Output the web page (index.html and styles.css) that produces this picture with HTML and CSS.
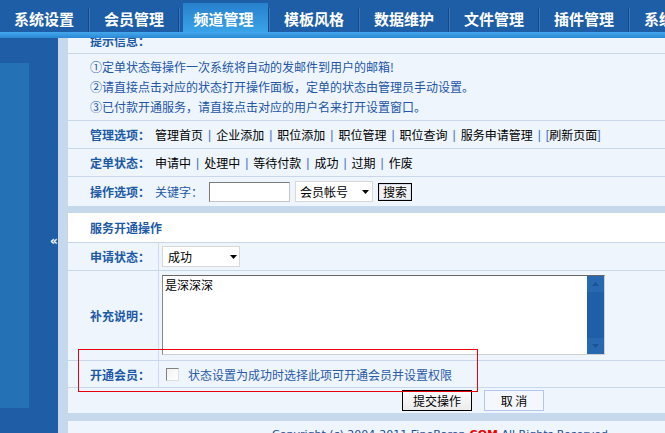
FILE: index.html
```html
<!DOCTYPE html>
<html lang="zh-CN">
<head>
<meta charset="utf-8">
<title>服务开通操作</title>
<link rel="stylesheet" href="styles.css">
</head>
<body>
<header class="topnav">
  <nav class="tabs">
    <a class="tab">系统设置</a><span class="tab-sep"></span>
    <a class="tab">会员管理</a><span class="tab-sep"></span>
    <a class="tab active">频道管理</a><span class="tab-sep"></span>
    <a class="tab">模板风格</a><span class="tab-sep"></span>
    <a class="tab">数据维护</a><span class="tab-sep"></span>
    <a class="tab">文件管理</a><span class="tab-sep"></span>
    <a class="tab">插件管理</a><span class="tab-sep"></span>
    <a class="tab">系统帮助</a>
  </nav>
  <div class="nav-strip"></div>
</header>
<div class="main">
  <aside class="sidebar">
    <div class="side-menu"></div>
    <span class="side-toggle">«</span>
  </aside>
  <div class="content">
    <section class="panel panel-info">
      <div class="panel-head">提示信息：</div>
      <div class="tips">
        <p>①定单状态每操作一次系统将自动的发邮件到用户的邮箱!</p>
        <p>②请直接点击对应的状态打开操作面板，定单的状态由管理员手动设置。</p>
        <p>③已付款开通服务，请直接点击对应的用户名来打开设置窗口。</p>
      </div>
      <div class="opt-row">
        <span class="opt-label">管理选项：</span><a class="opt-link">管理首页</a><span class="sep">|</span><a class="opt-link">企业添加</a><span class="sep">|</span><a class="opt-link">职位添加</a><span class="sep">|</span><a class="opt-link">职位管理</a><span class="sep">|</span><a class="opt-link">职位查询</a><span class="sep">|</span><a class="opt-link">服务申请管理</a><span class="sep">|</span><span class="bracket">[</span><a class="opt-link">刷新页面</a><span class="bracket">]</span>
      </div>
      <div class="opt-row">
        <span class="opt-label">定单状态：</span><a class="opt-link">申请中</a><span class="sep">|</span><a class="opt-link">处理中</a><span class="sep">|</span><a class="opt-link">等待付款</a><span class="sep">|</span><a class="opt-link">成功</a><span class="sep">|</span><a class="opt-link">过期</a><span class="sep">|</span><a class="opt-link">作废</a>
      </div>
      <div class="opt-row opt-search">
        <span class="opt-label">操作选项：</span><span class="kw-label">关键字：</span>
        <input class="kw-input" type="text">
        <span class="select-wrap sel-field">
          <select class="fake-select"><option>会员帐号</option></select>
          <svg class="sel-arrow" width="7" height="4" viewBox="0 0 7 4"><path d="M0 0H7L3.5 4Z" fill="#000"/></svg>
        </span>
        <button class="btn-search" type="button">搜索</button>
      </div>
    </section>

    <section class="panel panel-form">
      <div class="form-title">服务开通操作</div>
      <div class="form-row row-status">
        <div class="form-label">申请状态：</div>
        <div class="form-field">
          <span class="select-wrap sel-status">
            <select class="fake-select"><option>成功</option></select>
            <svg class="sel-arrow" width="7" height="4" viewBox="0 0 7 4"><path d="M0 0H7L3.5 4Z" fill="#000"/></svg>
          </span>
        </div>
      </div>
      <div class="form-row row-note">
        <div class="form-label">补充说明：</div>
        <div class="form-field field-note">
          <div class="textbox">
            <textarea class="note-area">是深深深</textarea>
            <div class="scrollbar">
              <span class="sb-btn"><svg width="7" height="4" viewBox="0 0 7 4"><path d="M0 4H7L3.5 0Z" fill="#1a5293"/></svg></span>
              <span class="sb-track"></span>
              <span class="sb-btn"><svg width="7" height="4" viewBox="0 0 7 4"><path d="M0 0H7L3.5 4Z" fill="#1a5293"/></svg></span>
            </div>
          </div>
        </div>
      </div>
      <div class="form-row row-member">
        <div class="form-label">开通会员：</div>
        <div class="form-field field-check">
          <input class="check" type="checkbox">
          <span class="check-text">状态设置为成功时选择此项可开通会员并设置权限</span>
        </div>
      </div>
      <div class="form-actions">
        <button class="btn-submit" type="button">提交操作</button>
        <button class="btn-cancel" type="button">取 消</button>
      </div>
      <div class="highlight-box"></div>
    </section>

    <footer class="panel footer">Copyright (c) 2004-2011 FineBaron<b class="brand">.COM</b> All Rights Reserved</footer>
  </div>
</div>
</body>
</html>
```

FILE: styles.css
```css
* { box-sizing: border-box; }
html, body { margin: 0; padding: 0; }
body {
  width: 665px;
  height: 433px;
  overflow: hidden;
  background: #c6d8ec;
  font-family: "Noto Sans CJK SC", "Liberation Sans", sans-serif;
  font-size: 12px;
  color: #000;
}

/* top navigation */
.topnav { height: 38px; background: #1e5ea6; }
.tabs { display: flex; height: 32px; overflow: hidden; white-space: nowrap; }
.tab {
  flex: 0 0 88px;
  height: 32px;
  display: flex;
  align-items: center;
  justify-content: center;
  padding-top: 4px;
  color: #fff;
  font-weight: bold;
  font-size: 15px;
  text-decoration: none;
}
.tab.active {
  flex-basis: 85px;
  margin-left: 3px;
  margin-top: 3px;
  height: 29px;
  padding-top: 2px;
  padding-right: 4px;
  background: linear-gradient(#2880cc, #3aa3e8);
}
.tab-sep {
  flex: 0 0 2px;
  margin-top: 8px;
  height: 24px;
  border-left: 1px solid #154a85;
  border-right: 1px solid #3877bd;
}
.nav-strip { height: 6px; background: linear-gradient(#44a8ec, #2b88d4); }

/* body layout */
.main { display: flex; height: 395px; overflow: hidden; }
.sidebar { flex: 0 0 58px; position: relative; background: #1f5ea6; padding-top: 25px; }
.side-menu { width: 29px; height: 345px; background: #2571b6; }
.side-toggle {
  position: absolute;
  left: 50px;
  top: 196px;
  color: #fff;
  font: bold 12px/14px "DejaVu Sans", sans-serif;
}
.content {
  flex: 1;
  min-width: 0;
  padding-left: 10px;
  display: flex;
  flex-direction: column;
}

.panel { background: #eef5fc; }

/* info panel */
.panel-info { margin-top: -11px; }
.panel-head {
  height: 27px;
  padding-left: 22px;
  display: flex;
  align-items: center;
  font-weight: bold;
  color: #1d5aa6;
  border-bottom: 1px solid #c8d6e6;
}
.tips {
  padding: 3px 0 3px 22px;
  border-bottom: 1px solid #c8d8ea;
  color: #2456a8;
}
.tips p { margin: 0; line-height: 20px; white-space: nowrap; }
.opt-row {
  height: 28px;
  padding-left: 22px;
  display: flex;
  align-items: center;
  white-space: nowrap;
  border-bottom: 1px solid #c8d8ea;
}
.opt-row.opt-search { height: 29px; border-bottom: 0; }
.opt-label { font-weight: bold; color: #1d5aa6; margin-right: 5px; }
.opt-link { color: #000; text-decoration: none; }
.sep { font-family: "Liberation Sans", sans-serif; color: #3d6fcc; margin: 0 5px; }
.bracket { font-family: "Liberation Sans", sans-serif; color: #3d6fcc; }
.kw-label { color: #1d5aa6; }
.kw-input {
  width: 81px;
  height: 20px;
  margin: 0 5px 0 6px;
  border: 1px solid;
  border-color: #7a7a7a #c4c4c4 #c4c4c4 #7a7a7a;
  background: #fff;
  padding: 0 2px;
}

.select-wrap { position: relative; display: inline-block; }
.fake-select {
  appearance: none;
  -webkit-appearance: none;
  display: block;
  width: 100%;
  height: 100%;
  margin: 0;
  border: 1px solid #d8d8d8;
  border-radius: 0;
  background: #fff;
  font-family: inherit;
  font-size: 12px;
  color: #000;
  padding: 0 0 0 4px;
}
.sel-arrow { position: absolute; right: 4px; top: 9px; pointer-events: none; }
.sel-field { width: 78px; height: 21px; margin-right: 5px; }
.sel-status { width: 78px; height: 21px; }
.sel-status .fake-select { padding-left: 5px; }
.sel-status .sel-arrow { right: 3px; }

.btn-search {
  width: 34px;
  height: 18px;
  padding: 0;
  border: 1px solid #000;
  box-shadow: inset 0 0 0 1px #d6dcea;
  background: #f2f2f2;
  font-family: inherit;
  font-size: 12px;
  line-height: 14px;
  color: #000;
}

/* form panel */
.panel-form { margin-top: 7px; position: relative; }
.form-title {
  height: 30px;
  padding-left: 22px;
  display: flex;
  align-items: center;
  background: #fff;
  font-weight: bold;
  color: #1d5aa6;
  border-bottom: 1px solid #c8d6e6;
}
.form-row {
  display: grid;
  grid-template-columns: 91px 1fr;
  border-bottom: 1px solid #c8d8ea;
}
.row-status { height: 28px; }
.row-note { height: 90px; }
.row-member { height: 27px; }
.form-label {
  padding-left: 22px;
  display: flex;
  align-items: center;
  font-weight: bold;
  color: #1d5aa6;
  border-right: 1px solid #cddbea;
}
.form-field { display: flex; align-items: center; padding-left: 3px; }
.field-note { align-items: flex-start; padding-top: 4px; }
.textbox {
  display: flex;
  width: 443px;
  height: 80px;
  border: 1px solid;
  border-color: #666 #cfcfcf #cfcfcf #8a8a8a;
  background: #fff;
}
.note-area {
  flex: 1;
  border: 0;
  margin: 0;
  padding: 2px;
  resize: none;
  outline: none;
  overflow: hidden;
  background: #fff;
  font-family: inherit;
  font-size: 12px;
  line-height: 14px;
  color: #000;
}
.scrollbar {
  flex: 0 0 17px;
  display: flex;
  flex-direction: column;
  background: #1f5ea8;
}
.sb-btn {
  flex: 0 0 16px;
  display: flex;
  align-items: center;
  justify-content: center;
  background: #2868b0;
}
.sb-track { flex: 1; }
.field-check { padding-left: 7px; }
.check {
  appearance: none;
  -webkit-appearance: none;
  width: 13px;
  height: 13px;
  margin: 0 9px 0 0;
  border: 1px solid;
  border-color: #808080 #dedede #dedede #808080;
  background: linear-gradient(135deg, #f1f1f1, #ffffff);
}
.check-text { color: #2a5aa8; white-space: nowrap; }

.form-actions {
  height: 25px;
  display: flex;
  align-items: center;
  padding-left: 334px;
  gap: 12px;
}
.btn-submit {
  width: 70px;
  height: 21px;
  padding: 0;
  border: 1px solid #000;
  background: linear-gradient(#fdfdfd, #ececec);
  font-family: inherit;
  font-size: 12px;
  color: #000;
}
.btn-cancel {
  width: 60px;
  height: 21px;
  padding: 0;
  border: 1px solid #b4c6ee;
  background: #f4f7fd;
  font-family: inherit;
  font-size: 12px;
  color: #000;
}
.highlight-box {
  position: absolute;
  left: 10px;
  top: 136px;
  width: 400px;
  height: 43px;
  border: 1px solid #e8000b;
  pointer-events: none;
}

/* footer */
.footer {
  margin-top: 8px;
  height: 40px;
  padding: 7px 0 0 204px;
  font: 11px/13px "DejaVu Sans", sans-serif;
  color: #1e4e96;
  white-space: nowrap;
}
.brand { color: #e00; }
```
